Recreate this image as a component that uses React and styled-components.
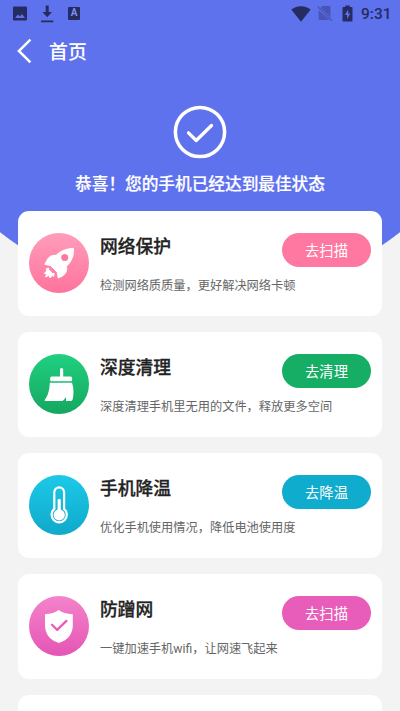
import React from 'react'
import styled, { createGlobalStyle } from 'styled-components';

const features = [
  {
    title: '网络保护',
    desc: '检测网络质质量，更好解决网络卡顿',
    action: '去扫描',
    color: '#ff78a1',
    from: '#ff9dba',
    to: '#ff739d',
    icon: 'rocket',
  },
  {
    title: '深度清理',
    desc: '深度清理手机里无用的文件，释放更多空间',
    action: '去清理',
    color: '#16ae64',
    from: '#20d080',
    to: '#15a75f',
    icon: 'broom',
  },
  {
    title: '手机降温',
    desc: '优化手机使用情况，降低电池使用度',
    action: '去降温',
    color: '#0facce',
    from: '#1dc9e8',
    to: '#10a9ca',
    icon: 'thermometer',
  },
  {
    title: '防蹭网',
    desc: '一键加速手机wifi，让网速飞起来',
    action: '去扫描',
    color: '#e85dba',
    from: '#f483cb',
    to: '#e555b5',
    icon: 'shield',
  },
];

const FeatureIcon = ({ name, color }) => {
  if(name === 'rocket'){
    return (
      <svg width='60' height='60' viewBox='0 0 60 60'>
        <path fill='#fff' stroke='#fff' strokeWidth='1' strokeLinejoin='round' d='M44.500 15.500C37.500 15.500 31.500 17.800 27.200 22.300C22.700 22 19.600 23.600 18 27.200L15.800 31.300Q18.900 32.200 21.500 32.500L28.200 39.200Q28.700 42 29.200 45L33 43.200C36.900 41 38.200 37.800 37.500 33.300C42.400 28.500 45 22.700 44.500 15.500Z' />
        <circle cx='35.700' cy='24.500' r='3.500' fill={color} />
        <path fill='#fff' stroke='#fff' strokeWidth='1' strokeLinejoin='round' d='M19.600 35.200Q17.300 35.300 17 36.300L18.200 38.200Q15.500 39 15.600 40.500L18 41Q16.600 42.800 16.800 44L19.800 42.300L20.900 44.700Q22.400 44.200 22.900 42.300L24.600 43.300L25.200 40.600C23.200 40.700 21.900 39.800 21.500 38.100C20.200 37.500 19.600 36.600 19.600 35.200Z' />
      </svg>
    )
  }
  if(name === 'broom'){
    return (
      <svg width='60' height='60' viewBox='0 0 60 60'>
        <path fill='#fff' d='M31 22.500V15.600a1.600 1.600 0 0 1 3.200 0v6.900h7.400a1.500 1.500 0 0 1 1.500 1.500v2.200a1 1 0 0 1-1 1H22.200a1 1 0 0 1-1-1V24a1.500 1.500 0 0 1 1.500-1.500Z' />
        <path fill='#fff' d='M20.800 28.700H43C44.700 33.500 45 39.500 43.700 45.300Q43.300 46.900 41.900 46.900H37L36.900 43Q35.800 45.300 33.600 46.900H16.200Q15 46.600 15.900 45.600C19.200 41.500 20.600 35.200 20.800 28.700Z' />
      </svg>
    )
  }
  if(name === 'thermometer'){
    return (
      <svg width='60' height='60' viewBox='0 0 60 60' fill='none'>
        <path stroke='#fff' strokeWidth='2.200' d='M25.300 33.900V17.300a4.900 4.900 0 0 1 9.800 0V33.900A7.600 7.600 0 1 1 25.300 33.900Z' />
        <path stroke='#fff' strokeWidth='3.200' strokeLinecap='round' d='M30.200 25.300V36' />
        <circle cx='30.200' cy='39.900' r='5.600' fill='#fff' />
      </svg>
    )
  }
  return (
    <svg width='60' height='60' viewBox='0 0 60 60' fill='none'>
      <path fill='#fff' d='M29.700 14C33.200 16.500 37.600 17.900 43.800 18.300V29.500C43.800 38.300 38.200 44.600 29.900 46.900C21.600 44.600 16 38.300 16 29.500V18.300C21.800 17.900 26.200 16.500 29.700 14Z' />
      <path stroke={color} strokeWidth='2.300' strokeLinecap='round' strokeLinejoin='round' d='M23 28.700L28.200 33.900L37.400 24.900' />
    </svg>
  )
}

const App = () => {
  return (
    <>
      <GlobalStyle />
      <Page>
        <StatusBar>
          <StatusIcons>
            <svg width='14' height='15' viewBox='0 0 14 15'>
              <path fill='#252c61' fillRule='evenodd' d='M1.200 .4H12.800Q14 .4 14 1.600V13.200Q14 14.400 12.800 14.400H1.200Q0 14.400 0 13.200V1.600Q0 .4 1.200 .4ZM2 12H12L9 8L6.900 10.500L5 8.500Z' />
            </svg>
            <svg width='13' height='18' viewBox='0 0 13 18'>
              <path fill='#252c61' d='M4.700 0.500H7.700V7H11L6.200 12.200L1.400 7H4.700ZM0 15.500H12.300V17.300H0Z' />
            </svg>
            <AppBadge>
              A
            </AppBadge>
          </StatusIcons>
          <StatusRight>
            <svg width='20' height='16' viewBox='0 0 20 16'>
              <path fill='#252c61' d='M.3 3.600C6 -.9 14 -.9 19.700 3.600L10 15.700Z' />
            </svg>
            <svg width='19' height='17' viewBox='0 0 19 17'>
              <path fill='#4855b4' d='M5.500 1H12.500Q13.500 1 13.500 2V12.500L3.700 2.800ZM1.700 5L12.500 15H2.700Q1.700 15 1.700 14Z' />
              <path stroke='#4855b4' strokeWidth='1.200' d='M.7 1.500L15 15.700' />
            </svg>
            <svg width='13' height='17' viewBox='0 0 13 17'>
              <path fill='#252c61' fillRule='evenodd' d='M3.300 .5H7.700V2H9.500Q10.500 2 10.500 3V15.500Q10.500 16.500 9.500 16.500H1.500Q.5 16.500 .5 15.500V3Q.5 2 1.500 2H3.300ZM6.200 4.500L2.800 10H5.100V14L8.400 8.500H6.200Z' />
            </svg>
            <Time>9:31</Time>
          </StatusRight>
        </StatusBar>
        <NavBar>
          <svg width='16' height='26' viewBox='0 0 16 26' fill='none'>
            <path stroke='#fff' strokeWidth='2.500' d='M14.400 1.600L2.900 13L14.400 24.400' />
          </svg>
          <NavTitle>首页</NavTitle>
        </NavBar>
        <Result>
          <svg width='54' height='54' viewBox='0 0 54 54' fill='none' stroke='#fff'>
            <circle cx='27' cy='27' r='24.600' strokeWidth='3.500' />
            <path strokeWidth='3.300' strokeLinecap='round' strokeLinejoin='round' d='M15.500 27.800L23.200 35.500L38.500 20.500' />
          </svg>
          <ResultText>恭喜！您的手机已经达到最佳状态</ResultText>
        </Result>
        <List>
          {
            features.map((item) => {
              return (
                <Card key={item.title}>
                  <IconCircle $from={item.from} $to={item.to}>
                    <FeatureIcon name={item.icon} color={item.color} />
                  </IconCircle>
                  <Info>
                    <CardTop>
                      <CardTitle>{item.title}</CardTitle>
                      <ActionButton $color={item.color}>{item.action}</ActionButton>
                    </CardTop>
                    <Desc>{item.desc}</Desc>
                  </Info>
                </Card>
              )
            })
          }
          <Card />
        </List>
      </Page>
    </>
  )
}

const GlobalStyle = createGlobalStyle`
  * {
    box-sizing: border-box;
    margin: 0;
    padding: 0;
  }

  body {
    background: #f3f3f3;
    font-family: "Noto Sans CJK SC", sans-serif;
    overflow: hidden;
  }

  svg {
    display: block;
    flex-shrink: 0;
  }
`;

const Page = styled.div`
  width: 400px;
  height: 711px;
  overflow: hidden;
  background: radial-gradient(circle at 200px -24px, #5f72ee 324.5px, #f3f3f3 325.5px);
`;

const StatusBar = styled.div`
  height: 27px;
  display: flex;
  justify-content: space-between;
  padding: 0 9px 0 13px;
`;

const StatusIcons = styled.div`
  display: flex;
  align-items: center;
  gap: 14px;
`;

const AppBadge = styled.span`
  width: 12px;
  height: 13px;
  border-radius: 1px;
  background: #252c61;
  color: #7f8ff2;
  font: 700 10px/12px Roboto, sans-serif;
  text-align: center;
`;

const StatusRight = styled.div`
  display: flex;
  align-items: center;
  gap: 6px;
`;

const Time = styled.span`
  width: 30px;
  font: 500 15.500px/28px Roboto, sans-serif;
  color: #252c61;
`;

const NavBar = styled.div`
  height: 48px;
  display: flex;
  align-items: center;
  gap: 17px;
  padding-left: 16px;
`;

const NavTitle = styled.h1`
  font-size: 18.900px;
  font-weight: 500;
  line-height: 28px;
  color: #fff;
`;

const Result = styled.div`
  height: 136px;
  display: flex;
  flex-direction: column;
  align-items: center;
  padding-top: 30px;
`;

const ResultText = styled.p`
  margin-top: 12px;
  font-size: 16.670px;
  font-weight: 500;
  line-height: 24px;
  color: #fff;
  -webkit-text-stroke: 0.2px #fff;
`;

const List = styled.div`
  display: flex;
  flex-direction: column;
  gap: 16.500px;
  padding: 0 18px;
`;

const Card = styled.div`
  height: 104.500px;
  flex-shrink: 0;
  display: flex;
  align-items: center;
  gap: 11px;
  padding: 0 11px;
  border-radius: 11px;
  background: #fff;
`;

const IconCircle = styled.div`
  width: 60px;
  height: 60px;
  flex-shrink: 0;
  border-radius: 50%;
  background: linear-gradient(${(props) => props.$from}, ${(props) => props.$to});
`;

const Info = styled.div`
  flex: 1;
  height: 60px;
`;

const CardTop = styled.div`
  height: 34px;
  display: flex;
  justify-content: space-between;
`;

const CardTitle = styled.h2`
  font-size: 17.780px;
  font-weight: 500;
  line-height: 24px;
  color: #222;
  -webkit-text-stroke: 0.3px #222;
`;

const ActionButton = styled.button`
  width: 89px;
  height: 34px;
  border: none;
  border-radius: 17px;
  background: ${(props) => props.$color};
  color: #fff;
  font-family: inherit;
  font-size: 14.300px;
  line-height: 34px;
`;

const Desc = styled.p`
  margin-top: 10px;
  font-family: Roboto, "Noto Sans CJK SC", sans-serif;
  font-size: 12.220px;
  line-height: 18px;
  color: #666;
  white-space: nowrap;
`;

export default App
